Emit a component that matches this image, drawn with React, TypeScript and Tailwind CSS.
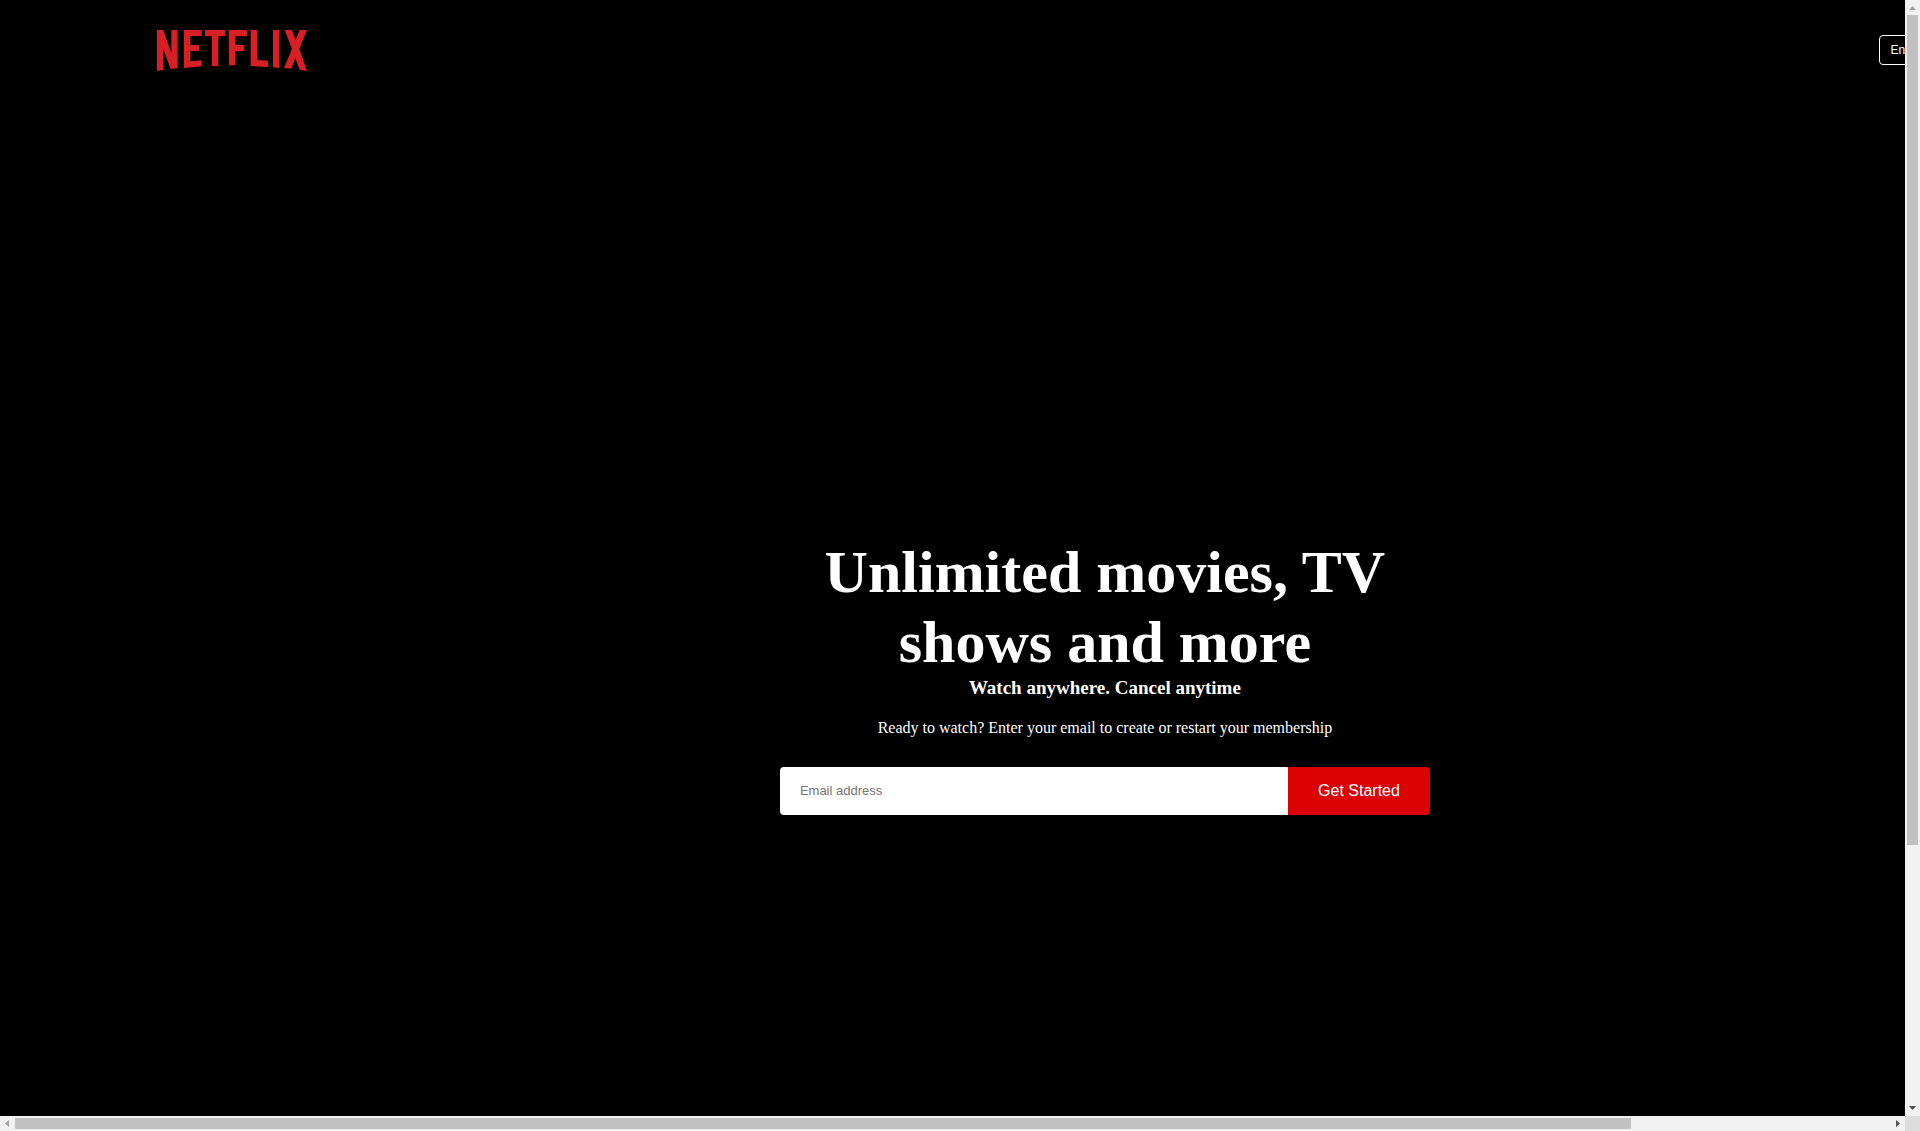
import React from "react";

function Logo() {
  return (
    <svg
      viewBox="0 0 450 123"
      role="img"
      aria-label="Netflix"
      className="block w-[150px] fill-[#d81f26]"
    >
      <path d="M0 0H19L43 68V0H62V115L41 117L19 57V120L0 123Z" />
      <path d="M81 0H134V18H100V45H126V63H100V94L134 91V109L81 114Z" />
      <path d="M144 0H204V19H184V108H165V19H144Z" />
      <path d="M215 0H270V19H235V45H262V63H235V106H216Z" />
      <path d="M281 0H301V90L333 92V111L281 108Z" />
      <path d="M348 0H367V114L348 112Z" />
      <path d="M383 0H405L416 29L428 0H450L427 56L450 123L428 119L415 85L403 116L381 114L405 57Z" />
    </svg>
  );
}

function Header() {
  return (
    <header className="flex items-start justify-between pt-[30px] pr-[269px] pl-[157px]">
      <a href="#home">
        <Logo />
      </a>
      <button
        type="button"
        className="mt-[5px] h-[30px] rounded border border-white px-[10px] text-xs text-white"
      >
        English
      </button>
    </header>
  );
}

function Hero() {
  return (
    <main className="flex flex-1 flex-col items-center justify-end pb-[301px] text-center font-['Liberation_Serif',serif] text-white">
      <div className="w-[650px]">
        <h1 className="text-[60px] leading-[70px] font-bold">
          Unlimited movies, TV shows and more
        </h1>
        <h3 className="text-[19px] leading-[21px] font-bold">
          Watch anywhere. Cancel anytime
        </h3>
        <p className="mt-[21px] text-base leading-[18px]">
          Ready to watch? Enter your email to create or restart your membership
        </p>
        <form
          className="mt-[30px] flex h-12 overflow-hidden rounded font-['Liberation_Sans',sans-serif]"
          onSubmit={(e) => e.preventDefault()}
        >
          <input
            type="email"
            aria-label="Email address"
            placeholder="Email address"
            className="min-w-0 flex-1 bg-white px-5 text-[13px] text-black outline-none placeholder:text-[#757575]"
          />
          <button type="submit" className="bg-[#db0001] px-[30px] text-base text-white">
            Get Started
          </button>
        </form>
      </div>
    </main>
  );
}

function Arrow({ d, className }: { d: string; className: string }) {
  return (
    <svg viewBox="0 0 15 15" aria-hidden="true" className={`size-[15px] shrink-0 ${className}`}>
      <path d={d} />
    </svg>
  );
}

export default function App() {
  return (
    <div className="grid h-screen grid-cols-[minmax(0,1fr)_15px] grid-rows-[minmax(0,1fr)_15px] bg-[#f1f1f1] font-['Liberation_Sans',sans-serif]">
      <div className="overflow-hidden bg-black">
        <div className="flex h-full w-[116%] flex-col">
          <Header />
          <Hero />
        </div>
      </div>
      <div aria-hidden="true" className="flex flex-col items-center">
        <Arrow d="M7.5 6L11 10H4Z" className="fill-[#a3a3a3]" />
        <div className="flex min-h-0 w-full flex-1 flex-col px-[2px]">
          <div className="h-[76.4%] bg-[#c1c1c1]" />
        </div>
        <Arrow d="M4 5H11L7.5 9Z" className="fill-[#505050]" />
      </div>
      <div aria-hidden="true" className="flex items-center">
        <Arrow d="M9 4V11L5 7.5Z" className="fill-[#a3a3a3]" />
        <div className="flex h-full min-w-0 flex-1 py-[2px]">
          <div className="w-[86.2%] bg-[#c1c1c1]" />
        </div>
        <Arrow d="M6 4L10 7.5L6 11Z" className="fill-[#505050]" />
      </div>
      <div aria-hidden="true" className="bg-[#dcdcdc]" />
    </div>
  );
}
